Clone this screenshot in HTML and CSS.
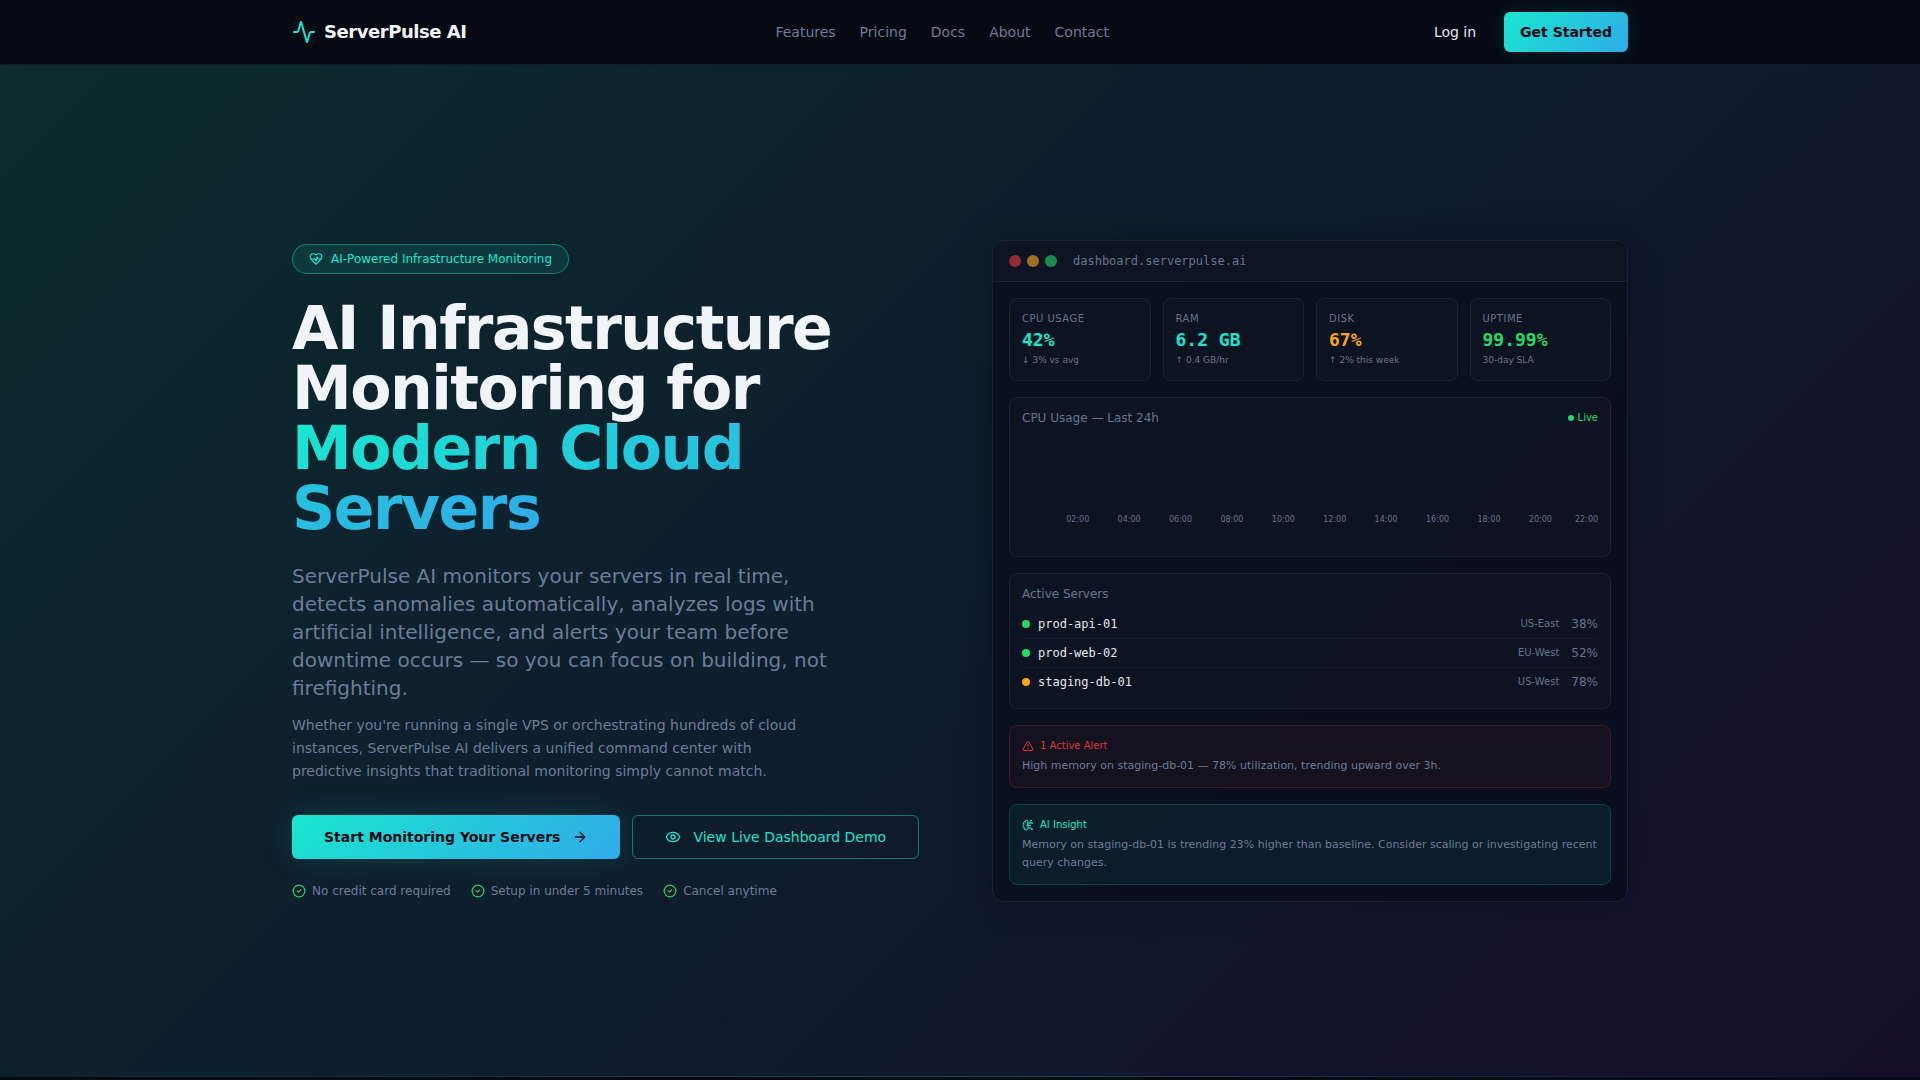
FILE: index.html
```html
<!DOCTYPE html>
<html lang="en">
<head>
<meta charset="utf-8">
<meta name="viewport" content="width=device-width, initial-scale=1">
<title>ServerPulse AI</title>
<link rel="stylesheet" href="styles.css">
</head>
<body>
<header class="site-header">
  <div class="container header-inner">
    <a href="#" class="brand">
      <svg class="icon icon-brand" viewBox="0 0 24 24"><path d="M22 12h-2.48a2 2 0 0 0-1.93 1.46l-2.35 8.36a.25.25 0 0 1-.48 0L9.24 2.18a.25.25 0 0 0-.48 0l-2.35 8.36A2 2 0 0 1 4.49 12H2"/></svg>
      <span>ServerPulse AI</span>
    </a>
    <nav class="main-nav">
      <a href="#features">Features</a>
      <a href="#pricing">Pricing</a>
      <a href="#docs">Docs</a>
      <a href="#about">About</a>
      <a href="#contact">Contact</a>
    </nav>
    <div class="header-actions">
      <button type="button" class="btn btn-ghost">Log in</button>
      <button type="button" class="btn btn-primary">Get Started</button>
    </div>
  </div>
</header>
<main>
  <section class="hero">
    <div class="container hero-grid">
      <div class="hero-copy">
        <div class="badge">
          <svg class="icon icon-sm" viewBox="0 0 24 24"><path d="M19 14c1.49-1.46 3-3.21 3-5.5A5.5 5.5 0 0 0 16.5 3c-1.76 0-3 .5-4.5 2-1.5-1.5-2.74-2-4.5-2A5.5 5.5 0 0 0 2 8.5c0 2.3 1.5 4.05 3 5.5l7 7Z"/><path d="M3.22 12H9.5l.5-1 2 4.5 2-7 1.5 3.5h5.27"/></svg>
          <span>AI-Powered Infrastructure Monitoring</span>
        </div>
        <h1>AI Infrastructure Monitoring for <span class="gradient-text">Modern Cloud Servers</span></h1>
        <p class="lead">ServerPulse AI monitors your servers in real time, detects anomalies automatically, analyzes logs with artificial intelligence, and alerts your team before downtime occurs — so you can focus on building, not firefighting.</p>
        <p class="sub">Whether you're running a single VPS or orchestrating hundreds of cloud instances, ServerPulse AI delivers a unified command center with predictive insights that traditional monitoring simply cannot match.</p>
        <div class="cta-row">
          <button type="button" class="btn btn-primary btn-lg">Start Monitoring Your Servers
            <svg class="icon icon-md" viewBox="0 0 24 24"><path d="M5 12h14"/><path d="m12 5 7 7-7 7"/></svg>
          </button>
          <button type="button" class="btn btn-outline btn-lg">
            <svg class="icon icon-md" viewBox="0 0 24 24"><path d="M2.062 12.348a1 1 0 0 1 0-.696 10.75 10.75 0 0 1 19.876 0 1 1 0 0 1 0 .696 10.75 10.75 0 0 1-19.876 0"/><circle cx="12" cy="12" r="3"/></svg>
            View Live Dashboard Demo</button>
        </div>
        <ul class="perks">
          <li><svg class="icon icon-sm" viewBox="0 0 24 24"><circle cx="12" cy="12" r="10"/><path d="m9 12 2 2 4-4"/></svg>No credit card required</li>
          <li><svg class="icon icon-sm" viewBox="0 0 24 24"><circle cx="12" cy="12" r="10"/><path d="m9 12 2 2 4-4"/></svg>Setup in under 5 minutes</li>
          <li><svg class="icon icon-sm" viewBox="0 0 24 24"><circle cx="12" cy="12" r="10"/><path d="m9 12 2 2 4-4"/></svg>Cancel anytime</li>
        </ul>
      </div>
      <div class="dashboard">
        <div class="window-bar">
          <span class="light light-red"></span>
          <span class="light light-amber"></span>
          <span class="light light-green"></span>
          <span class="window-url">dashboard.serverpulse.ai</span>
        </div>
        <div class="window-body">
          <div class="stats">
            <div class="panel"><p class="stat-label">CPU Usage</p><p class="stat-value teal">42%</p><p class="stat-note">↓ 3% vs avg</p></div>
            <div class="panel"><p class="stat-label">RAM</p><p class="stat-value teal">6.2 GB</p><p class="stat-note">↑ 0.4 GB/hr</p></div>
            <div class="panel"><p class="stat-label">Disk</p><p class="stat-value amber">67%</p><p class="stat-note">↑ 2% this week</p></div>
            <div class="panel"><p class="stat-label">Uptime</p><p class="stat-value green">99.99%</p><p class="stat-note">30-day SLA</p></div>
          </div>
          <div class="panel chart">
            <div class="chart-head"><span class="panel-title">CPU Usage — Last 24h</span><span class="live">Live</span></div>
            <div class="chart-area">
              <div class="chart-axis">
                <span>02:00</span><span>04:00</span><span>06:00</span><span>08:00</span><span>10:00</span><span>12:00</span><span>14:00</span><span>16:00</span><span>18:00</span><span>20:00</span><span>22:00</span>
              </div>
            </div>
          </div>
          <div class="panel servers">
            <p class="panel-title">Active Servers</p>
            <ul>
              <li><span class="dot dot-green"></span><span class="server-name">prod-api-01</span><span class="region">US-East</span><span class="load">38%</span></li>
              <li><span class="dot dot-green"></span><span class="server-name">prod-web-02</span><span class="region">EU-West</span><span class="load">52%</span></li>
              <li><span class="dot dot-amber"></span><span class="server-name">staging-db-01</span><span class="region">US-West</span><span class="load">78%</span></li>
            </ul>
          </div>
          <div class="panel notice notice-alert">
            <p class="notice-title"><svg class="icon icon-xs" viewBox="0 0 24 24"><path d="m21.73 18-8-14a2 2 0 0 0-3.48 0l-8 14A2 2 0 0 0 4 21h16a2 2 0 0 0 1.73-3"/><path d="M12 9v4"/><path d="M12 17h.01"/></svg>1 Active Alert</p>
            <p class="notice-text">High memory on staging-db-01 — 78% utilization, trending upward over 3h.</p>
          </div>
          <div class="panel notice notice-insight">
            <p class="notice-title"><svg class="icon icon-xs" viewBox="0 0 24 24"><path d="M12 5a3 3 0 1 0-5.997.125 4 4 0 0 0-2.526 5.77 4 4 0 0 0 .556 6.588A4 4 0 1 0 12 18Z"/><path d="M9 13a4.5 4.5 0 0 0 3-4"/><path d="M6.003 5.125A3 3 0 0 0 6.401 6.5"/><path d="M3.477 10.896a4 4 0 0 1 .585-.396"/><path d="M6 18a4 4 0 0 1-1.967-.516"/><path d="M12 13h4"/><path d="M12 18h6a2 2 0 0 1 2 2v1"/><path d="M12 8h8"/><path d="M16 8V5a2 2 0 0 1 2-2"/><circle cx="16" cy="13" r=".5"/><circle cx="18" cy="3" r=".5"/><circle cx="20" cy="21" r=".5"/><circle cx="20" cy="8" r=".5"/></svg>AI Insight</p>
            <p class="notice-text">Memory on staging-db-01 is trending 23% higher than baseline. Consider scaling or investigating recent query changes.</p>
          </div>
        </div>
      </div>
    </div>
  </section>
</main>
</body>
</html>
```
FILE: styles.css
```css
:root {
  --bg: #060a13;
  --text: #f1f5f9;
  --text-soft: #e2e6ee;
  --muted: #65748f;
  --muted-light: #6c7c99;
  --teal: #19e6cf;
  --blue: #30abe8;
  --green: #26d968;
  --amber: #f9a51f;
  --red: #dc3939;
  --line: #1a2332;
  --sans: "DejaVu Sans", "Liberation Sans", sans-serif;
  --mono: "DejaVu Sans Mono", "Liberation Mono", monospace;
}

* { box-sizing: border-box; }

body {
  margin: 0;
  background: var(--bg);
  color: var(--text);
  font: 16px/24px var(--sans);
}

h1, p, ul { margin: 0; padding: 0; }
ul { list-style: none; }
a { color: inherit; text-decoration: none; }

.container {
  max-width: 1400px;
  margin: 0 auto;
  padding: 0 32px;
}

.icon {
  flex: none;
  fill: none;
  stroke: currentColor;
  stroke-width: 2;
  stroke-linecap: round;
  stroke-linejoin: round;
}
.icon-xs { width: 12px; height: 12px; }
.icon-sm { width: 14px; height: 14px; }
.icon-md { width: 16px; height: 16px; }
.icon-brand { width: 24px; height: 24px; color: var(--teal); }

.btn {
  display: inline-flex;
  align-items: center;
  justify-content: center;
  gap: 8px;
  height: 40px;
  padding: 0 16px;
  border: 0;
  border-radius: 6px;
  background: none;
  color: var(--text-soft);
  font: 14px/20px var(--sans);
  white-space: nowrap;
  cursor: pointer;
}
.btn-primary {
  background: linear-gradient(135deg, var(--teal), var(--blue));
  box-shadow: 0 0 20px rgba(25, 230, 207, 0.12);
  color: var(--bg);
  font-weight: 600;
}
.btn-outline {
  border: 1px solid rgba(25, 230, 207, 0.45);
  color: var(--teal);
}
.btn-lg { height: 44px; padding: 0 32px; gap: 12px; }
.btn-lg.btn-primary { box-shadow: 0 0 32px rgba(25, 230, 207, 0.15); }

.site-header {
  position: sticky;
  top: 0;
  z-index: 10;
  background: var(--bg);
  border-bottom: 1px solid #131c2b;
}
.header-inner {
  display: flex;
  align-items: center;
  justify-content: space-between;
  height: 64px;
}
.brand {
  display: flex;
  align-items: center;
  gap: 8px;
  font-size: 18px;
  line-height: 28px;
  font-weight: 700;
  letter-spacing: -0.025em;
}
.main-nav {
  display: flex;
  gap: 24px;
  color: var(--muted-light);
  font-size: 14px;
}
.header-actions { display: flex; gap: 12px; }

.hero {
  position: relative;
  padding: 175px 0;
  background: linear-gradient(135deg, #0b2b2e 0%, #0f1a2c 60%, #150e2b 100%);
}
.hero::after {
  content: "";
  position: absolute;
  inset: auto 0 0;
  height: 1px;
  background: linear-gradient(90deg, transparent, rgba(25, 230, 207, 0.25), transparent);
}
.hero-grid {
  display: grid;
  grid-template-columns: 1fr 1fr;
  gap: 64px;
  align-items: center;
}

.badge {
  display: inline-flex;
  align-items: center;
  gap: 8px;
  padding: 6px 16px;
  border: 1px solid rgba(25, 230, 207, 0.4);
  border-radius: 16px;
  background: rgba(25, 230, 207, 0.1);
  color: var(--teal);
  font-size: 12px;
  line-height: 16px;
}
h1 {
  margin-top: 24px;
  font-size: 60px;
  line-height: 60px;
  font-weight: 700;
  letter-spacing: -0.025em;
}
.gradient-text {
  background: linear-gradient(135deg, var(--teal), var(--blue));
  -webkit-background-clip: text;
  background-clip: text;
  color: transparent;
}
.lead {
  max-width: 576px;
  margin-top: 24px;
  color: var(--muted-light);
  font-size: 20px;
  line-height: 28px;
}
.sub {
  max-width: 512px;
  margin-top: 12px;
  color: var(--muted-light);
  font-size: 14px;
  line-height: 23px;
}
.cta-row {
  display: flex;
  gap: 12px;
  margin-top: 32px;
}
.perks {
  display: flex;
  gap: 20px;
  margin-top: 24px;
  color: var(--muted-light);
  font-size: 12px;
  line-height: 16px;
}
.perks li { display: flex; align-items: center; gap: 6px; }
.perks .icon { color: var(--green); }

.dashboard {
  overflow: hidden;
  border: 1px solid var(--line);
  border-radius: 12px;
  background: rgba(8, 14, 28, 0.8);
  box-shadow: 0 0 32px rgba(6, 10, 19, 0.4);
}
.window-bar {
  display: flex;
  align-items: center;
  gap: 6px;
  padding: 12px 16px;
  border-bottom: 1px solid var(--line);
  background: rgba(17, 24, 36, 0.6);
}
.light { width: 12px; height: 12px; border-radius: 50%; }
.light-red { background: #922b33; }
.light-amber { background: #9e6e22; }
.light-green { background: #1c8c4d; }
.window-url {
  margin-left: 10px;
  color: var(--muted);
  font: 12px/16px var(--mono);
}
.window-body {
  display: flex;
  flex-direction: column;
  gap: 16px;
  padding: 16px;
}
.panel {
  padding: 12px;
  border: 1px solid var(--line);
  border-radius: 8px;
  background: rgba(17, 24, 36, 0.5);
}
.stats {
  display: grid;
  grid-template-columns: repeat(4, 1fr);
  gap: 12px;
}
.stat-label {
  color: var(--muted);
  font-size: 10px;
  line-height: 16px;
  letter-spacing: 0.05em;
  text-transform: uppercase;
}
.stat-value { font: 700 18px/26px var(--mono); }
.stat-note { color: var(--muted); font-size: 9px; line-height: 15px; }
.teal { color: var(--teal); }
.amber { color: var(--amber); }
.green { color: var(--green); }

.panel-title { color: var(--muted); font-size: 12px; line-height: 16px; }
.chart-head {
  display: flex;
  align-items: center;
  justify-content: space-between;
}
.live {
  display: flex;
  align-items: center;
  gap: 4px;
  color: var(--green);
  font-size: 10px;
  line-height: 16px;
}
.live::before {
  content: "";
  width: 6px;
  height: 6px;
  border-radius: 50%;
  background: currentColor;
}
.chart-area {
  display: flex;
  align-items: flex-end;
  height: 118px;
  padding: 0 0 16px 30px;
}
.chart-axis {
  display: flex;
  flex: 1;
  color: var(--muted);
  font-size: 8px;
  line-height: 16px;
  text-align: center;
}
.chart-axis span { flex: 1; }
.chart-axis span:last-child { flex: 0 0 32px; text-align: right; }

.servers ul { margin-top: 8px; }
.servers li {
  display: flex;
  align-items: center;
  gap: 8px;
  padding: 6px 0;
  border-bottom: 1px solid #131b29;
  font-size: 12px;
  line-height: 16px;
}
.servers li:last-child { border-bottom: 0; }
.dot { width: 8px; height: 8px; border-radius: 50%; }
.dot-green { background: var(--green); }
.dot-amber { background: var(--amber); }
.server-name { flex: 1; color: var(--text-soft); font-family: var(--mono); }
.region { color: var(--muted); font-size: 10px; }
.load { margin-left: 4px; color: var(--muted); }

.notice-title {
  display: flex;
  align-items: center;
  gap: 6px;
  font-size: 10px;
  line-height: 15px;
}
.notice-text {
  margin-top: 4px;
  color: var(--muted-light);
  font-size: 11px;
  line-height: 18px;
}
.notice-alert {
  border-color: #451924;
  background: rgba(220, 57, 57, 0.06);
}
.notice-alert .notice-title { color: var(--red); }
.notice-insight {
  border-color: #0c4448;
  background: rgba(25, 230, 207, 0.07);
}
.notice-insight .notice-title { color: var(--teal); }

@media (max-width: 1100px) {
  .hero { padding: 64px 0; }
  .hero-grid { grid-template-columns: 1fr; }
  .cta-row, .perks { flex-wrap: wrap; }
}
```
